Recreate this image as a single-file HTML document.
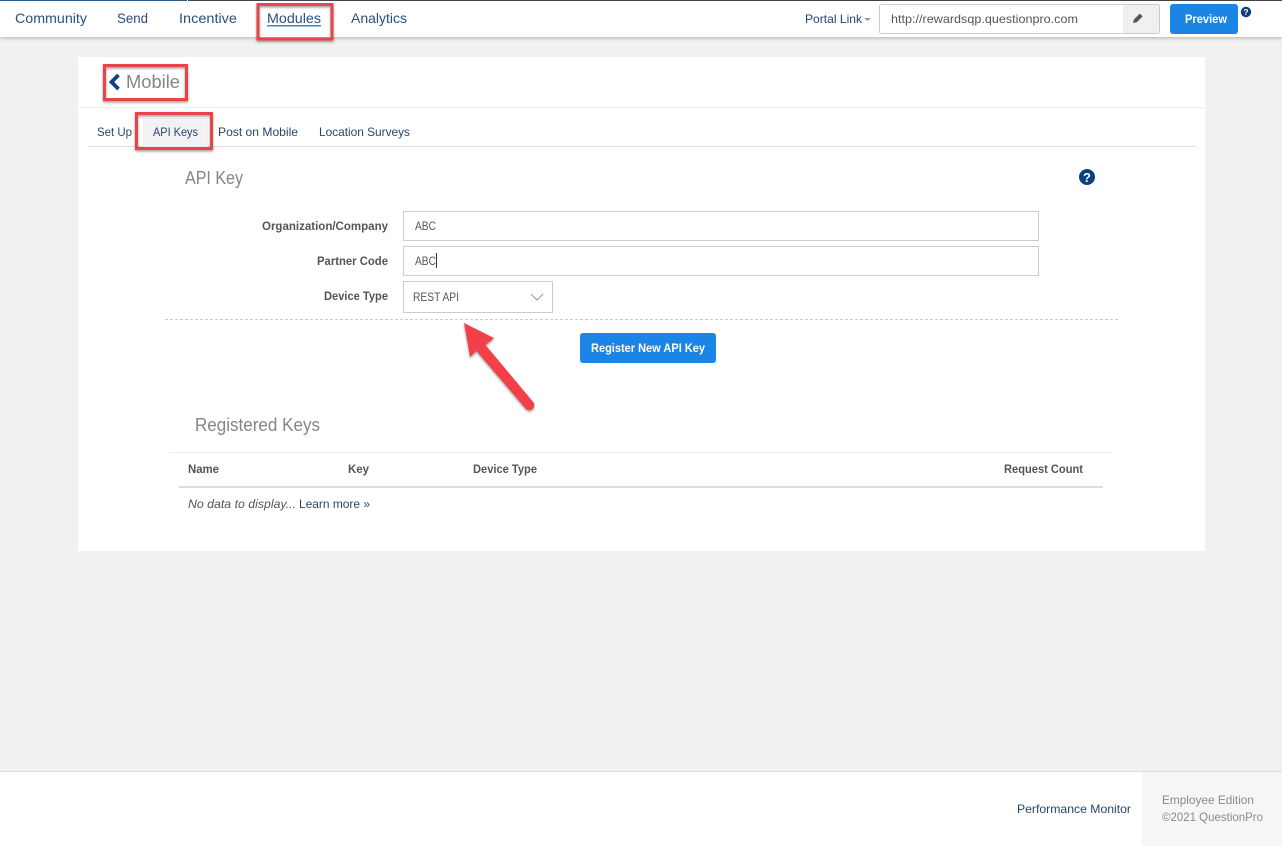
<!DOCTYPE html>
<html>
<head>
<meta charset="utf-8">
<title>Mobile API Keys</title>
<style>
html,body{margin:0;padding:0;width:1282px;height:846px;overflow:hidden;background:#f1f1f1}
svg{display:block;position:absolute;left:0;top:0}
text{font-family:"Liberation Sans",sans-serif;font-size:12px}
.nav{font-size:14px;fill:#2b4f7c}
.tab{font-size:12px;fill:#26466f}
.lbl{font-size:12px;font-weight:bold;fill:#555}
.val{font-size:12px;fill:#555}
.h{font-size:18px;fill:#858585}
.th{font-size:12px;font-weight:bold;fill:#555}
.wb{font-size:12px;font-weight:bold;fill:#fff}
.foot{font-size:12px;fill:#8a8a8a}
</style>
</head>
<body>
<svg width="1282" height="846" viewBox="0 0 1282 846" xmlns="http://www.w3.org/2000/svg">
<defs>
<filter id="barsh" x="-5%" y="-50%" width="110%" height="200%"><feDropShadow dx="0" dy="1" stdDeviation="2" flood-color="#000" flood-opacity=".28"/></filter>
<filter id="redsh" x="-30%" y="-30%" width="160%" height="160%"><feDropShadow dx="0" dy="1.5" stdDeviation="1.2" flood-color="#000" flood-opacity=".4"/></filter>
</defs>
<rect width="1282" height="846" fill="#f1f1f1"/>

<!-- top bar -->
<rect x="0" y="0" width="1282" height="37" fill="#fff" filter="url(#barsh)"/>
<rect x="0" y="0" width="187" height="1" fill="#2c5a85"/>
<rect x="188" y="0" width="1094" height="1" fill="#444"/>
<text class="nav" x="15" y="23" textLength="72" lengthAdjust="spacingAndGlyphs">Community</text>
<text class="nav" x="117" y="23" textLength="31" lengthAdjust="spacingAndGlyphs">Send</text>
<text class="nav" x="179" y="23" textLength="58" lengthAdjust="spacingAndGlyphs">Incentive</text>
<text class="nav" x="267" y="23" textLength="54" lengthAdjust="spacingAndGlyphs">Modules</text>
<rect x="267" y="25" width="54" height="1.500" fill="#3a8fb0"/>
<text class="nav" x="351" y="23" textLength="56" lengthAdjust="spacingAndGlyphs">Analytics</text>

<text x="805" y="23" class="tab" textLength="57" lengthAdjust="spacingAndGlyphs">Portal Link</text>
<path d="M864 18h7l-3.500 3z" fill="#999"/>
<rect x="879.500" y="4.500" width="280" height="29" rx="2" fill="#fff" stroke="#ccc"/>
<rect x="1123" y="5" width="36" height="28" fill="#f0f0f0"/>
<text x="891" y="23" class="val" textLength="187" lengthAdjust="spacingAndGlyphs">http://rewardsqp.questionpro.com</text>
<path d="M1133 23l1-3.600 5.800-5.800 2.800 2.800-5.800 5.800z" fill="#555"/>
<rect x="1170" y="4" width="68" height="30" rx="3" fill="#1b85e5"/>
<text class="wb" x="1185" y="23" textLength="42" lengthAdjust="spacingAndGlyphs">Preview</text>
<circle cx="1246" cy="12" r="5.200" fill="#0b3f85"/>
<text x="1246" y="15" text-anchor="middle" style="font-size:8.500px;font-weight:bold;fill:#fff">?</text>

<!-- card -->
<rect x="78" y="57" width="1127" height="494" fill="#fff"/>
<rect x="78" y="107" width="1127" height="1" fill="#eee"/>
<rect x="88" y="146" width="1107" height="1" fill="#ddd"/>

<path d="M118.500 75l-7 7 7 7" fill="none" stroke="#0f4184" stroke-width="3.800"/>
<text class="h" x="126" y="88" textLength="54" lengthAdjust="spacingAndGlyphs">Mobile</text>

<rect x="143" y="118" width="65" height="29" fill="#f2f2f2"/>
<text class="tab" x="97" y="136" textLength="35" lengthAdjust="spacingAndGlyphs">Set Up</text>
<text class="tab" x="153" y="136" textLength="45" lengthAdjust="spacingAndGlyphs">API Keys</text>
<text class="tab" x="218" y="136" textLength="80" lengthAdjust="spacingAndGlyphs">Post on Mobile</text>
<text class="tab" x="319" y="136" textLength="91" lengthAdjust="spacingAndGlyphs">Location Surveys</text>

<text class="h" x="185" y="184" textLength="58" lengthAdjust="spacingAndGlyphs">API Key</text>
<circle cx="1087" cy="177" r="8" fill="#0b3f85"/>
<text x="1087" y="182" text-anchor="middle" style="font-size:13px;font-weight:bold;fill:#fff">?</text>

<text class="lbl" x="262" y="230" textLength="126" lengthAdjust="spacingAndGlyphs">Organization/Company</text>
<text class="lbl" x="317" y="265" textLength="71" lengthAdjust="spacingAndGlyphs">Partner Code</text>
<text class="lbl" x="324" y="300" textLength="64" lengthAdjust="spacingAndGlyphs">Device Type</text>

<rect x="403.500" y="211.500" width="635" height="29" fill="#fff" stroke="#ccc"/>
<text class="val" x="415" y="230" textLength="21" lengthAdjust="spacingAndGlyphs">ABC</text>
<rect x="403.500" y="246.500" width="635" height="29" fill="#fff" stroke="#ccc"/>
<text class="val" x="415" y="265" textLength="21" lengthAdjust="spacingAndGlyphs">ABC</text>
<rect x="436" y="253" width="1" height="15" fill="#333"/>
<rect x="403.500" y="281.500" width="149" height="31" fill="#fff" stroke="#ccc"/>
<text class="val" x="413" y="301" textLength="46" lengthAdjust="spacingAndGlyphs">REST API</text>
<path d="M531 294l6 6 6-6" fill="none" stroke="#999" stroke-width="1"/>

<line x1="165" y1="319.500" x2="1118" y2="319.500" stroke="#ccc" stroke-dasharray="3 2"/>

<rect x="580" y="333" width="136" height="30" rx="3" fill="#1b85e5"/>
<text class="wb" x="591" y="352" textLength="114" lengthAdjust="spacingAndGlyphs">Register New API Key</text>

<text class="h" x="195" y="431" textLength="125" lengthAdjust="spacingAndGlyphs">Registered Keys</text>
<rect x="170" y="452" width="942" height="1" fill="#eee"/>
<text class="th" x="188" y="473" textLength="31" lengthAdjust="spacingAndGlyphs">Name</text>
<text class="th" x="348" y="473" textLength="21" lengthAdjust="spacingAndGlyphs">Key</text>
<text class="th" x="473" y="473" textLength="64" lengthAdjust="spacingAndGlyphs">Device Type</text>
<text class="th" x="1004" y="473" textLength="79" lengthAdjust="spacingAndGlyphs">Request Count</text>
<rect x="179" y="486" width="924" height="2" fill="#ddd"/>
<text x="188" y="508" font-style="italic" fill="#555" textLength="108" lengthAdjust="spacingAndGlyphs">No data to display...</text>
<text class="tab" x="299" y="508" textLength="71" lengthAdjust="spacingAndGlyphs">Learn more »</text>

<!-- annotations -->
<g fill="none" stroke="#e8444a" stroke-width="3" filter="url(#redsh)">
<rect x="258" y="4.500" width="74" height="34.500"/>
<rect x="104.500" y="65.500" width="82" height="34"/>
<rect x="136.500" y="113.500" width="75" height="35"/>
</g>
<g filter="url(#redsh)">
<path d="M464 323L494 338 485.500 345 534 403Q535 407 532 409.500 528.500 411.500 525.500 408.500L476.500 351 470 357z" fill="#f2404a"/>
</g>

<!-- footer -->
<rect x="0" y="771" width="1282" height="75" fill="#fff"/>
<rect x="0" y="771" width="1282" height="1" fill="#ddd"/>
<rect x="1142" y="772" width="140" height="74" fill="#f6f6f6"/>
<text class="tab" x="1017" y="813" textLength="114" lengthAdjust="spacingAndGlyphs">Performance Monitor</text>
<text class="foot" x="1162" y="804" textLength="92" lengthAdjust="spacingAndGlyphs">Employee Edition</text>
<text class="foot" x="1162" y="821" textLength="101" lengthAdjust="spacingAndGlyphs">©2021 QuestionPro</text>
</svg>
</body>
</html>
